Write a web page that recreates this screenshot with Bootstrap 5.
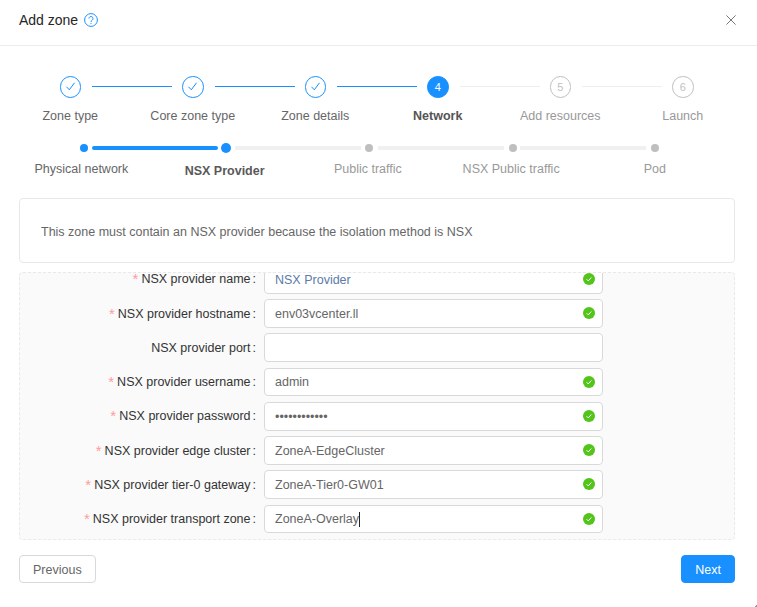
<!DOCTYPE html>
<html lang="en">
<head>
    <meta charset="UTF-8">
    <meta name="viewport" content="width=device-width, initial-scale=1.0">
    <title>Add zone</title>
    <link href="https://cdn.jsdelivr.net/npm/bootstrap@5.3.0/dist/css/bootstrap.min.css" rel="stylesheet">
    <style>
        html, body { height: 100%; overflow: hidden; }
        body {
            font-family: "Liberation Sans", Arial, sans-serif;
            font-size: 12.5px;
            color: #666;
            background: #fff;
        }
        .zone-head {
            height: 46px;
            padding: 0 21px 5px 19px;
            border-bottom: 1px solid #ececec;
            color: #262626;
            font-size: 14px;
        }
        .zone-help { margin-left: 6px; }
        .zone-close { margin-left: auto; background: none; border: 0; padding: 0; line-height: 0; }

        .main-steps { padding: 30px 9px 0; height: 98px; margin: 0; }
        .main-step { width: 122.5px; position: relative; text-align: center; color: #999; }
        .step-dot {
            width: 21.5px; height: 21.5px; border-radius: 50%;
            border: 1px solid #bfbfbf; color: #bfbfbf;
            font-size: 11px; margin: 0 auto 9px;
        }
        .main-step.is-done { color: #666; }
        .main-step.is-done .step-dot { border-color: #1890ff; color: #1890ff; }
        .main-step.is-active { color: #555; font-weight: 700; }
        .main-step.is-active .step-dot { background: #1890ff; border-color: #1890ff; color: #fff; font-weight: 400; }
        .step-line { position: absolute; top: 10px; left: 83px; width: 80px; height: 1px; background: #eee; }
        .is-done .step-line { background: #1890ff; }

        .sub-steps { padding: 0 0 0 13px; height: 54px; }
        .sub-step { width: 142.75px; position: relative; text-align: center; color: #999; height: 43px; }
        .sub-mark { height: 10px; margin-top: -1px; }
        .sub-step:nth-child(2) .sub-mark, .sub-step:nth-child(3) .sub-mark { padding-right: 2px; }
        .sub-dot { width: 8px; height: 8px; border-radius: 50%; background: #bfbfbf; }
        .sub-label { margin-top: 8px; margin-left: -6px; line-height: 16px; }
        .sub-step:nth-child(3) .sub-label { margin-left: -4px; }
        .sub-step:nth-child(4) .sub-label { margin-left: -3px; }
        .sub-step:nth-child(5) .sub-label { margin-left: -1px; }
        .sub-track { position: absolute; top: 2px; left: 79px; width: 126px; height: 4px; background: #f0f0f0; }
        .sub-step.is-done { color: #666; }
        .sub-step.is-done .sub-dot, .sub-step.is-active .sub-dot { background: #1890ff; }
        .sub-step.is-done .sub-track { background: #1890ff; border-radius: 2px; }
        .sub-step.is-active { color: #595959; font-weight: 700; }
        .sub-step.is-active .sub-dot { width: 10px; height: 10px; }
        .sub-step.is-active .sub-label { margin-top: 10px; margin-left: -5px; }

        .note-box {
            height: 65px; margin: 0 22px 9px 19px;
            border: 1px solid #e8e8e8; border-radius: 4px;
            padding: 3px 0 0 21px; color: #666;
        }
        .form-frame {
            height: 268px; margin: 0 22px 15px 19px;
            border: 1px dashed #e9e9e9; border-radius: 4px;
            background: #fafafa; overflow: hidden;
        }
        .form-rows { margin-top: -8.25px; }
        .form-line { height: 34.25px; padding-bottom: 5.5px; }
        .form-name { width: 244px; text-align: right; color: #333; padding: 1px 8px 0 0; flex: none; white-space: nowrap; }
        .form-name .req { color: #ff9c9c; font-size: 15px; margin-right: 3px; vertical-align: -1px; }
        .form-name .colon { margin-left: 2px; }
        .form-field { position: relative; width: 339px; flex: none; }
        .form-field .form-control {
            height: 28.75px; min-height: 0; padding: 1px 30px 0 10px;
            font-size: 12.5px; color: #666; background: #fff;
            border: 1px solid #d9d9d9; border-radius: 4px; box-shadow: none;
            font-family: inherit;
        }
        .form-field .form-control.is-auto { color: #5b7ca8; }
        .ok-icon { position: absolute; right: 8px; top: 8px; width: 12px; height: 12px; line-height: 0; }
        .caret-bar {
            position: absolute; top: 7px; left: 94.5px; width: 1px; height: 15px; background: #222;
        }
        .foot-btns { padding: 0 22px 0 19px; }
        .foot-btns .btn {
            height: 28px; font-size: 12.5px; line-height: 26px; padding: 1px 13px 0; border-radius: 4px;
        }
        .btn-prev { background: #fff; border: 1px solid #d9d9d9; color: #666; }
        .btn-next { background: #1890ff; border: 1px solid #1890ff; color: #fff; }
        .corner-mark {
            position: fixed; right: 0; bottom: 0; width: 3px; height: 2px;
            background: linear-gradient(135deg, transparent 50%, #999 50%);
        }
    </style>
</head>
<body>
    <div class="zone-head d-flex align-items-center">
        <span>Add zone</span>
        <svg class="zone-help" width="14" height="14" viewBox="0 0 14 14" fill="none" stroke="#1890ff">
            <circle cx="7" cy="7" r="6.4"/>
            <path d="M5 5.5a2 2 0 1 1 3.2 1.6C7.4 7.7 7 8 7 9"/>
            <circle cx="7" cy="10.6" r=".6" fill="#1890ff" stroke="none"/>
        </svg>
        <button class="zone-close" type="button" aria-label="Close">
            <svg width="10" height="10" viewBox="0 0 10 10" fill="none" stroke="#777" stroke-width="1"><path d="M.4.4l9.2 9.2M9.6.4L.4 9.6"/></svg>
        </button>
    </div>

    <div class="main-steps d-flex" id="mainSteps"></div>
    <div class="sub-steps d-flex" id="subSteps"></div>

    <div class="note-box d-flex align-items-center">This zone must contain an NSX provider because the isolation method is NSX</div>

    <div class="form-frame">
        <div class="form-rows" id="formRows"></div>
    </div>

    <div class="foot-btns d-flex justify-content-between">
        <button type="button" class="btn btn-prev">Previous</button>
        <button type="button" class="btn btn-next">Next</button>
    </div>
    <div class="corner-mark"></div>

    <script src="https://cdn.jsdelivr.net/npm/bootstrap@5.3.0/dist/js/bootstrap.bundle.min.js"></script>
    <script>
        const checkSvg = '<svg width="11" height="11" viewBox="0 0 11 11" fill="none" stroke="#1890ff" stroke-width="1"><path d="M1.5 5.8l2.8 3 5.2-7"/></svg>';
        const okSvg = '<svg width="12" height="12" viewBox="0 0 12 12"><circle cx="6" cy="6" r="6" fill="#52c41a"/><path d="M3.6 6.2l1.7 1.7 3-3.4" fill="none" stroke="#fff" stroke-width="1"/></svg>';

        const mainSteps = ['Zone type', 'Core zone type', 'Zone details', 'Network', 'Add resources', 'Launch'];
        document.getElementById('mainSteps').innerHTML = mainSteps.map((name, i) => {
            const state = i < 3 ? 'is-done' : i === 3 ? 'is-active' : '';
            const mark = i < 3 ? checkSvg : i + 1;
            const line = i < 5 ? '<div class="step-line"></div>' : '';
            return `<div class="main-step ${state}"><div class="step-dot d-flex align-items-center justify-content-center">${mark}</div>${line}<div>${name}</div></div>`;
        }).join('');

        const subSteps = ['Physical network', 'NSX Provider', 'Public traffic', 'NSX Public traffic', 'Pod'];
        document.getElementById('subSteps').innerHTML = subSteps.map((name, i) => {
            const state = i < 1 ? 'is-done' : i === 1 ? 'is-active' : '';
            const track = i < 4 ? '<div class="sub-track"></div>' : '';
            return `<div class="sub-step ${state}"><div class="sub-mark d-flex align-items-center justify-content-center"><div class="sub-dot"></div></div>${track}<div class="sub-label">${name}</div></div>`;
        }).join('');

        const fields = [
            { label: 'NSX provider name', value: 'NSX Provider', req: true, ok: true, cls: 'is-auto' },
            { label: 'NSX provider hostname', value: 'env03vcenter.ll', req: true, ok: true },
            { label: 'NSX provider port', value: '', req: false, ok: false },
            { label: 'NSX provider username', value: 'admin', req: true, ok: true },
            { label: 'NSX provider password', value: '123456789012', req: true, ok: true, type: 'password' },
            { label: 'NSX provider edge cluster', value: 'ZoneA-EdgeCluster', req: true, ok: true },
            { label: 'NSX provider tier-0 gateway', value: 'ZoneA-Tier0-GW01', req: true, ok: true },
            { label: 'NSX provider transport zone', value: 'ZoneA-Overlay', req: true, ok: true, caret: true }
        ];
        document.getElementById('formRows').innerHTML = fields.map(f => `
            <div class="form-line d-flex align-items-center">
                <div class="form-name">${f.req ? '<span class="req">*</span>' : ''}${f.label}<span class="colon">:</span></div>
                <div class="form-field">
                    <input class="form-control ${f.cls || ''}" type="${f.type || 'text'}" value="${f.value}">
                    ${f.ok ? `<span class="ok-icon">${okSvg}</span>` : ''}
                    ${f.caret ? '<span class="caret-bar"></span>' : ''}
                </div>
            </div>`).join('');
    </script>
</body>
</html>
